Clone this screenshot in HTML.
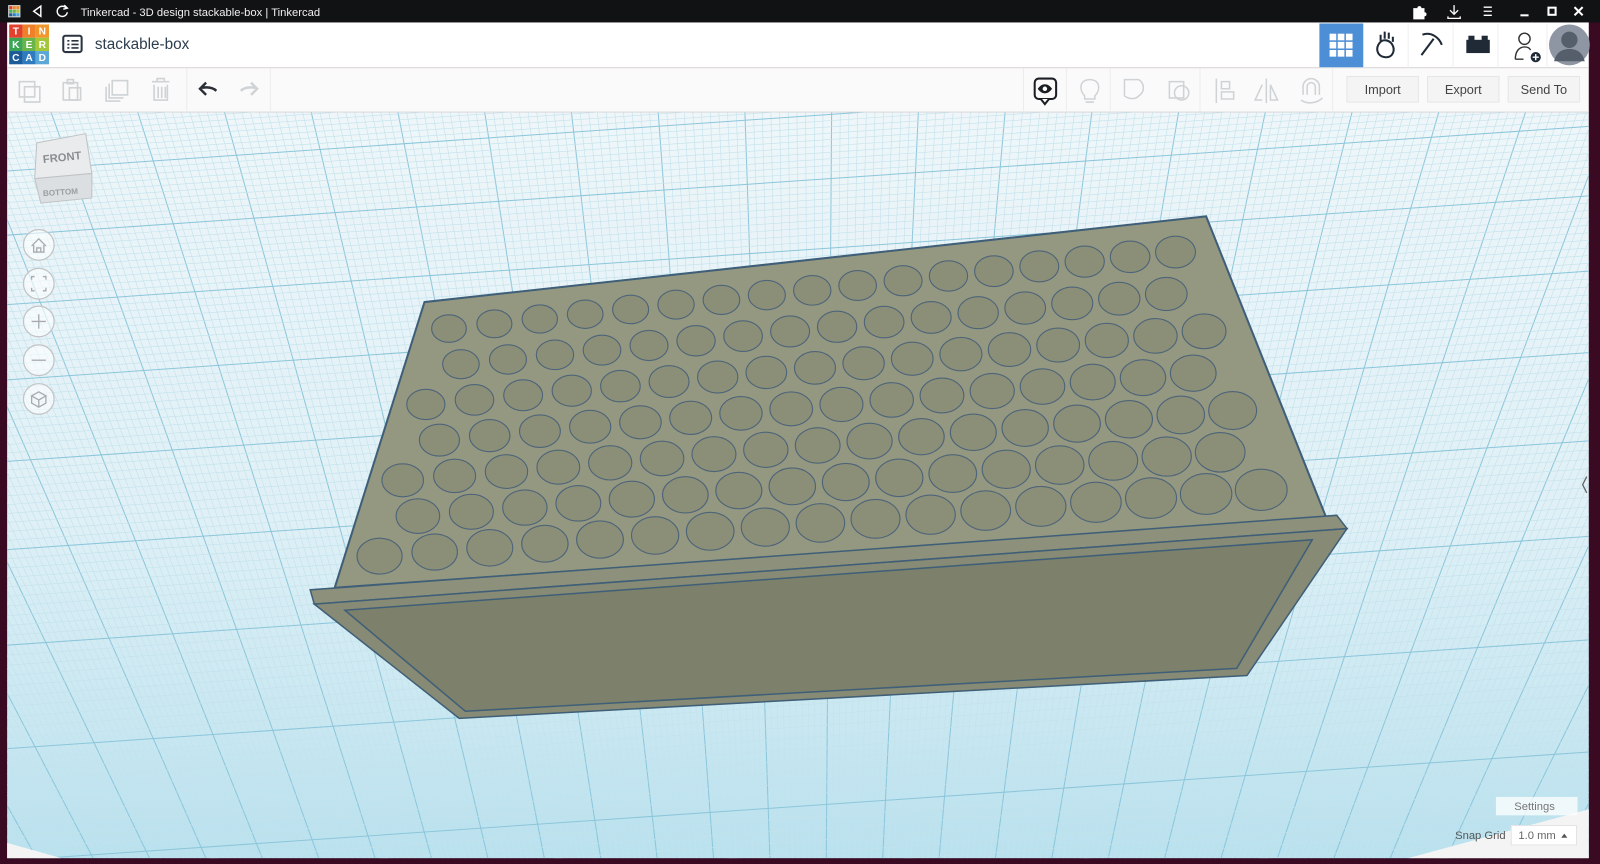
<!DOCTYPE html>
<html><head><meta charset="utf-8"><style>
html,body{margin:0;padding:0;width:1600px;height:864px;overflow:hidden;background:#3a0a22}
svg{display:block;position:absolute;left:0;top:0}
text{font-family:"Liberation Sans","DejaVu Sans",sans-serif}
</style></head><body>
<svg id="s" width="1600" height="864" viewBox="0 0 1568 846.7" xmlns="http://www.w3.org/2000/svg">
<defs>
<linearGradient id="bg" x1="0" y1="0" x2="0" y2="1">
<stop offset="0" stop-color="#eef6f9"/><stop offset="0.55" stop-color="#dff0f6"/><stop offset="1" stop-color="#b9e1ee"/>
</linearGradient>
<clipPath id="vp"><rect x="7" y="110" width="1550" height="731"/></clipPath>
</defs>
<rect width="1568" height="847" fill="#3a0a22"/>
<rect x="7" y="110" width="1550" height="731" fill="url(#bg)"/>
<g id="grid" clip-path="url(#vp)"></g>
<polygon points="7,826 60,841 7,841" fill="#f4f4f4"/>
<polygon points="1380,841 1557,793 1557,841" fill="#f4f4f4"/>
<g id="box">
<polygon points="416,296 1182,212 1300,508 328,576" fill="#959881" stroke="#3f5f78" stroke-width="2"/>
<g id="holes"></g>
<polygon points="304,578 1310,505 1320,518 308,592" fill="#8d907a" stroke="#3f5f78" stroke-width="1.5"/>
<polygon points="308,592 1320,518 1222,662 450,704" fill="#878a74" stroke="#3f5f78" stroke-width="1.5"/>
<polygon points="338,598 1286,529 1212,655 456,697" fill="#7d806a" stroke="#3f5f78" stroke-width="1.5"/>
</g>
<g>
<polygon points="36,140 84,131 90,170 34,175" fill="#e9ebec" stroke="#bfc3c6"/>
<polygon points="34,175 90,170 90,194 40,199" fill="#dcdfe1" stroke="#bfc3c6"/>
<text x="42" y="158" font-size="11" font-weight="bold" fill="#8a8e92" transform="rotate(-6 60 155)">FRONT</text>
<text x="42" y="191" font-size="8" font-weight="bold" fill="#9a9ea2" transform="rotate(-4 60 188)">BOTTOM</text>
</g>
<g fill="rgba(255,255,255,0.6)" stroke="#c2c4c6" stroke-width="1.2">
<circle cx="38" cy="240" r="15"/><circle cx="38" cy="278" r="15"/><circle cx="38" cy="315" r="15"/><circle cx="38" cy="353" r="15"/><circle cx="38" cy="391" r="15"/>
</g>
<g stroke="#a8abae" stroke-width="1.3" fill="none">
<path d="M31,241 L38,234 L45,241 M33,240 V247 H43 V240 M36,247 V243 H40 V247"/>
<path d="M31,274 V271 H34 M42,271 H45 V274 M45,282 V285 H42 M34,285 H31 V282"/>
<path d="M31,315 H45 M38,308 V322"/>
<path d="M31,353 H45"/>
<path d="M38,384 L45,388 L38,392 L31,388 Z M31,388 V395 L38,399 L45,395 V388 M38,392 V399"/>
</g>
<path d="M1555,467 L1551,475 L1555,483" stroke="#666" stroke-width="1.3" fill="none"/>
<rect x="1466" y="781" width="80" height="18" fill="rgba(255,255,255,0.75)"/>
<text x="1484" y="794" font-size="11" fill="#777">Settings</text>
<text x="1426" y="822" font-size="11" fill="#555">Snap Grid</text>
<rect x="1481" y="809" width="64" height="19" fill="#fff" stroke="#e4e4e4"/>
<text x="1488" y="822" font-size="11" fill="#666">1.0 mm</text>
<path d="M1530,821 L1533,817 L1536,821Z" fill="#555"/>
<rect x="0" y="0" width="1568" height="22" fill="#111214"/>
<rect x="8" y="5" width="12" height="12" fill="#ddd"/>
<rect x="9" y="6" width="3" height="3" fill="#e2412d"/><rect x="12.5" y="6" width="3" height="3" fill="#f08a24"/><rect x="16" y="6" width="3" height="3" fill="#f08a24"/>
<rect x="9" y="9.5" width="3" height="3" fill="#4caf50"/><rect x="12.5" y="9.5" width="3" height="3" fill="#6ab04c"/><rect x="16" y="9.5" width="3" height="3" fill="#a5c73c"/>
<rect x="9" y="13" width="3" height="3" fill="#1b5d9a"/><rect x="12.5" y="13" width="3" height="3" fill="#2f7fc1"/><rect x="16" y="13" width="3" height="3" fill="#4ea3d6"/>
<path d="M40,6 L33,11 L40,16 Z" stroke="#fff" stroke-width="1.4" fill="none"/>
<path d="M65,8 A5,5 0 1 0 66,12 M63,5 L66,8 L62,9" stroke="#fff" stroke-width="1.4" fill="none"/>
<text x="79" y="15.5" font-size="11" fill="#f0f0f0">Tinkercad - 3D design stackable-box | Tinkercad</text>
<path d="M1385,8 h4 a2,2 0 0 1 4,0 h3 v4 a2,2 0 0 1 0,4 v3 h-11z" fill="#fff"/>
<path d="M1425,5 v9 M1421,10 l4,4 l4,-4 M1419,16 v2 h12 v-2" stroke="#fff" stroke-width="1.3" fill="none"/>
<path d="M1454,7 h8 M1454,11 h8 M1454,15 h8" stroke="#fff" stroke-width="1.3"/>
<path d="M1490,15 h8" stroke="#fff" stroke-width="2"/>
<rect x="1517.5" y="7.5" width="7" height="7" stroke="#fff" stroke-width="2" fill="none"/>
<path d="M1543,7 l8,8 M1551,7 l-8,8" stroke="#fff" stroke-width="2"/>
<rect x="7" y="22" width="1550" height="44" fill="#fff"/>
<g font-size="10" font-weight="bold" fill="#fff" text-anchor="middle">
<rect x="9" y="24" width="13" height="13" fill="#e2412d"/><text x="15.5" y="34">T</text>
<rect x="22" y="24" width="13" height="13" fill="#f07f2a"/><text x="28.5" y="34">I</text>
<rect x="35" y="24" width="13" height="13" fill="#f0962a"/><text x="41.5" y="34">N</text>
<rect x="9" y="37" width="13" height="13" fill="#3aa655"/><text x="15.5" y="47">K</text>
<rect x="22" y="37" width="13" height="13" fill="#6ab54a"/><text x="28.5" y="47">E</text>
<rect x="35" y="37" width="13" height="13" fill="#a4c639"/><text x="41.5" y="47">R</text>
<rect x="9" y="50" width="13" height="13" fill="#1c5b99"/><text x="15.5" y="60">C</text>
<rect x="22" y="50" width="13" height="13" fill="#2e7cbf"/><text x="28.5" y="60">A</text>
<rect x="35" y="50" width="13" height="13" fill="#5aa7d8"/><text x="41.5" y="60">D</text>
</g>
<rect x="62" y="35" width="18" height="16" rx="2" stroke="#2b3440" stroke-width="2" fill="none"/>
<path d="M66,40 h2 M70,40 h7 M66,43.5 h2 M70,43.5 h7 M66,47 h2 M70,47 h7" stroke="#2b3440" stroke-width="1.6"/>
<text x="93" y="48" font-size="15" fill="#2d3e4f">stackable-box</text>
<rect x="1293" y="23" width="43" height="44" fill="#4d8fd6"/>
<g fill="#fff"><rect x="1303" y="33" width="6.5" height="6.5"/><rect x="1311" y="33" width="6.5" height="6.5"/><rect x="1319" y="33" width="6.5" height="6.5"/>
<rect x="1303" y="41" width="6.5" height="6.5"/><rect x="1311" y="41" width="6.5" height="6.5"/><rect x="1319" y="41" width="6.5" height="6.5"/>
<rect x="1303" y="49" width="6.5" height="6.5"/><rect x="1311" y="49" width="6.5" height="6.5"/><rect x="1319" y="49" width="6.5" height="6.5"/></g>
<g stroke="#eee"><path d="M1380,24 v42 M1424,24 v42 M1468,24 v42 M1516,24 v42"/></g>
<g stroke="#1f2a36" stroke-width="2" fill="none">
<path d="M1352,42 c-4,5 -3,13 5,14 c8,1 11,-7 7,-13 c-3,-4 -9,-5 -12,-1z"/>
<path d="M1353,40 v-6 M1357,38 v-7 M1361,38 v-6 M1365,41 v-5"/>
<path d="M1394,34 c8,-3 16,2 19,10 M1405,38 l-12,16"/>
</g>
<rect x="1437" y="39" width="23" height="13" fill="#1f2a36"/><rect x="1439" y="35" width="6" height="5" fill="#1f2a36"/><rect x="1452" y="35" width="6" height="5" fill="#1f2a36"/>
<circle cx="1494" cy="38" r="5.5" stroke="#333" stroke-width="1.4" fill="none"/>
<path d="M1485,58 c0,-8 4,-12 9,-12 c3,0 5,1 6,3 M1485,58 h8" stroke="#333" stroke-width="1.4" fill="none"/>
<circle cx="1505" cy="56" r="5" fill="#1f2a36"/><path d="M1502,56 h6 M1505,53 v6" stroke="#fff" stroke-width="1.4"/>
<circle cx="1538" cy="44" r="20" fill="#8e96a3"/>
<circle cx="1538" cy="39" r="8" fill="#555e6b"/><path d="M1523,60 c2,-9 8,-12 15,-12 c7,0 13,3 15,12z" fill="#555e6b"/>
<rect x="7" y="66" width="1550" height="44" fill="#fafafa"/>
<path d="M7,66.5 H1557 M7,109.5 H1557" stroke="#e6e6e6"/>
<path d="M183,67 v42 M265,67 v42 M1003,67 v42 M1045,67 v42 M1088,67 v42 M1176,67 v42 M1306,67 v42" stroke="#ececec"/>
<g stroke="#cfd3d6" stroke-width="1.6" fill="none">
<rect x="19" y="80" width="15" height="15"/><rect x="24" y="85" width="15" height="15"/>
<rect x="62" y="81" width="14" height="17"/><rect x="66" y="78" width="6" height="4"/><rect x="68" y="86" width="11" height="12"/>
<rect x="110" y="79" width="15" height="14"/><path d="M107,82 v14 h14"/><path d="M104,85 v14 h14"/>
<path d="M149,80 h17 M154,80 v-3 h7 v3 M151,83 v15 h13 v-15 M155,85 v11 M158.5,85 v11 M162,85 v11"/>
</g>
<path d="M212,89 c-3,-3 -8,-4 -14,-3 M202,81 l-6,6 l6,6" stroke="#2a2f35" stroke-width="2.4" fill="none"/>
<path d="M236,89 c3,-3 8,-4 14,-3 M246,81 l6,6 l-6,6" stroke="#cfd3d6" stroke-width="2.4" fill="none"/>
<rect x="1014" y="77" width="21" height="20" rx="4" stroke="#1b1f24" stroke-width="2" fill="none"/>
<path d="M1020,97 l4,5 l4,-5" stroke="#1b1f24" stroke-width="2" fill="#fff"/>
<path d="M1017,87 c4,-6 10,-6 14,0 c-4,6 -10,6 -14,0z" fill="#1b1f24"/><circle cx="1024" cy="87" r="2.2" fill="#fff"/>
<g stroke="#cfd3d6" stroke-width="1.5" fill="none">
<path d="M1063,94 c-6,-6 -5,-16 5,-16 c10,0 11,10 5,16 v3 h-10z M1064,100 h8"/>
<path d="M1102,78 h14 c6,4 6,12 0,16 v0 c-4,4 -10,3 -14,0z"/>
<rect x="1146" y="80" width="14" height="16"/><circle cx="1158" cy="91" r="7"/>
<path d="M1192,77 v24 M1197,80 h8 v7 h-8z M1197,90 h12 v7 h-12z"/>
<path d="M1241,77 v24 M1237,83 l-7,15 h7 M1245,83 l7,15 h-7z"/>
<path d="M1277,93 v-8 a8,8 0 0 1 16,0 v8 M1281,93 v-8 a4,4 0 0 1 8,0 v8 M1275,98 c5,4 15,4 21,-2"/>
</g>
<g fill="#f4f4f4" stroke="#e6e6e6"><rect x="1320" y="75" width="70" height="25"/><rect x="1399" y="75" width="70" height="25"/><rect x="1478" y="75" width="70" height="25"/></g>
<g font-size="12.5" fill="#444" text-anchor="middle"><text x="1355" y="92">Import</text><text x="1434" y="92">Export</text><text x="1513" y="92">Send To</text></g>
</svg>
<script>
(function(){
var NS="http://www.w3.org/2000/svg",g=document.getElementById('grid'),h=document.getElementById('holes');
function ln(x1,y1,x2,y2,c,w){var l=document.createElementNS(NS,'line');l.setAttribute('x1',x1);l.setAttribute('y1',y1);l.setAttribute('x2',x2);l.setAttribute('y2',y2);l.setAttribute('stroke',c);l.setAttribute('stroke-width',w);g.appendChild(l);}
var vx=800,vy=2200,i=0;
for(var x=-800;x<2400;x+=8.5,i++){var maj=(i%10==0);ln(vx,vy,x,110,maj?'#8cc6da':'#c3e2ec',maj?1:0.6);}
var y=60,k=0;
while(y<950){var maj=(k%10==0);ln(0,y+50,1600,y-60,maj?'#8cc6da':'#c3e2ec',maj?1:0.6);y+=6+(y-110)*0.008;k++;}
var P00=[440,322],P10=[1152,247],P01=[372,545],P11=[1236,480];
for(var r=0;r<7;r++){var v=r/6;var n=(r%2==0)?17:16;var off=(r%2==0)?0:0.5;
for(var c=0;c<n;c++){var u=(c+off)/16;
var x=(1-u)*(1-v)*P00[0]+u*(1-v)*P10[0]+(1-u)*v*P01[0]+u*v*P11[0];
var yy=(1-u)*(1-v)*P00[1]+u*(1-v)*P10[1]+(1-u)*v*P01[1]+u*v*P11[1];
var s=(1+v*0.3)*(1+u*0.15);
var e=document.createElementNS(NS,'ellipse');e.setAttribute('cx',x);e.setAttribute('cy',yy);e.setAttribute('rx',17*s);e.setAttribute('ry',13.5*s);
e.setAttribute('fill','#8c8f78');e.setAttribute('stroke','#4d6479');e.setAttribute('stroke-width','1.1');h.appendChild(e);}}
})();
</script>
</body></html>
